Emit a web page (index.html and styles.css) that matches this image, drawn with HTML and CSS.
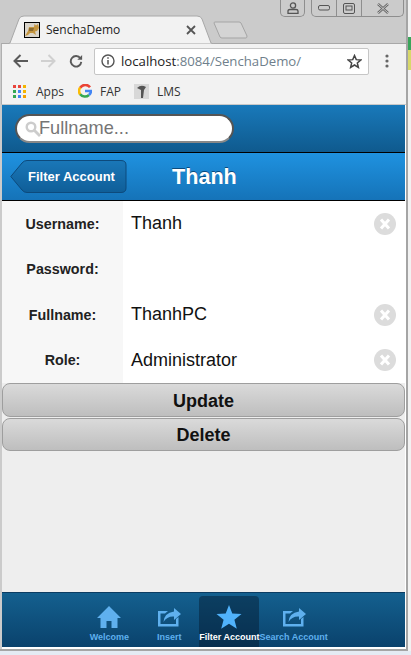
FILE: index.html
```html
<!DOCTYPE html>
<html lang="en">

<head>
    <meta charset="UTF-8">
    <title>SenchaDemo</title>
    <link rel="stylesheet" href="styles.css">
</head>

<body>
    <div class="window">
        <div class="tabstrip">
            <div class="tab">
                <svg class="tab-shape" width="207" height="29" viewBox="0 0 207 29">
                    <path d="M0 29 L3 28 L12 4 Q13 1 17 1 L190 1 Q194 1 195 4 L204 28 L207 29 Z" fill="#f2f2f2" stroke="#a8a8a8" />
                </svg>
                <span class="favicon">
                    <svg width="14" height="14" viewBox="0 0 14 14">
                        <rect width="14" height="14" fill="#d9d4ca" />
                        <path d="M0 13 L3 8 L4 4 L9 4 L9.500 1 L11 2.500 L13 1 L14 5 L12 8 L10 8.500 L11 12 L8 10 L5 10 L3 12 Z" fill="#c4953f" />
                        <path d="M4 5 L9 5 L8 8 L4 8 Z" fill="#8a6a2e" />
                    </svg>
                </span>
                <span class="tab-title">SenchaDemo</span>
                <svg class="tab-close" width="10" height="10" viewBox="0 0 10 10">
                    <path d="M1 1 L9 9 M9 1 L1 9" stroke="#555" stroke-width="1.8" />
                </svg>
            </div>
            <svg class="newtab" width="36" height="18" viewBox="0 0 36 18">
                <path d="M1 2 Q1 1 2 1 L26 1 Q27 1 28 2 L34 15 Q34 17 33 17 L9 17 Q8 17 7 16 Z" fill="#d4d4d4" stroke="#a5a5a5" />
            </svg>
            <div class="winbtn winbtn-user">
                <svg width="12" height="12" viewBox="0 0 12 12">
                    <circle cx="6" cy="3.5" r="2.6" fill="none" stroke="#555" stroke-width="1.3" />
                    <path d="M1 11.5 L1 9 Q1 7.5 3 7.5 L9 7.5 Q11 7.5 11 9 L11 11.5 Z" fill="none" stroke="#555" stroke-width="1.3" />
                </svg>
            </div>
            <div class="wingroup">
                <div class="winbtn-part">
                    <svg width="12" height="6" viewBox="0 0 12 6"><rect x=".5" y=".5" width="11" height="4.5" rx="1.5" fill="none" stroke="#555" /></svg>
                </div>
                <div class="winbtn-part">
                    <svg width="12" height="11" viewBox="0 0 12 11"><rect x=".5" y=".5" width="11" height="10" rx="1.5" fill="none" stroke="#555" /><rect x="3" y="3" width="6" height="4" fill="none" stroke="#555" /></svg>
                </div>
                <div class="winbtn-part winbtn-close">
                    <svg width="14" height="11" viewBox="0 0 14 11"><path d="M2 1 L12 10 M12 1 L2 10" stroke="#666" stroke-width="2.4" /><path d="M2 1 L12 10 M12 1 L2 10" stroke="#ddd" stroke-width=".8" /></svg>
                </div>
            </div>
        </div>

        <div class="toolbar">
            <svg class="nav-icon" width="15" height="14" viewBox="0 0 15 14">
                <path d="M15 7 L2 7 M7.5 1 L1.5 7 L7.5 13" fill="none" stroke="#5a5a5a" stroke-width="2" />
            </svg>
            <svg class="nav-icon" width="15" height="14" viewBox="0 0 15 14">
                <path d="M0 7 L13 7 M7.5 1 L13.5 7 L7.5 13" fill="none" stroke="#d0d0d0" stroke-width="2" />
            </svg>
            <svg class="nav-icon" width="14" height="14" viewBox="0 0 16 16">
                <path d="M13 5 A6 6 0 1 0 14 9" fill="none" stroke="#5a5a5a" stroke-width="2.2" />
                <path d="M9.5 6.5 L15 6.5 L15 1 Z" fill="#5a5a5a" />
            </svg>
            <div class="omnibox">
                <svg width="14" height="14" viewBox="0 0 14 14">
                    <circle cx="7" cy="7" r="6" fill="none" stroke="#555" stroke-width="1.4" />
                    <path d="M7 6 L7 10.5 M7 3.2 L7 4.8" stroke="#555" stroke-width="1.5" />
                </svg>
                <span class="url"><span class="url-host">localhost</span>:8084/SenchaDemo/</span>
                <svg class="url-star" width="15" height="15" viewBox="0 0 24 24">
                    <path d="M12 2.5 L14.8 9 L22 9.6 L16.5 14.3 L18.2 21.4 L12 17.6 L5.8 21.4 L7.5 14.3 L2 9.6 L9.2 9 Z" fill="none" stroke="#444" stroke-width="2.4" />
                </svg>
            </div>
            <svg class="menu-dots" width="4" height="14" viewBox="0 0 4 14">
                <circle cx="2" cy="2" r="1.6" fill="#666" />
                <circle cx="2" cy="7" r="1.6" fill="#666" />
                <circle cx="2" cy="12" r="1.6" fill="#666" />
            </svg>
        </div>

        <div class="bookmarks">
            <div class="bookmark bookmark-apps">
                <svg width="13" height="13" viewBox="0 0 13 13">
                    <rect x="0" y="0" width="3" height="3" fill="#e8453c" /><rect x="5" y="0" width="3" height="3" fill="#e8453c" /><rect x="10" y="0" width="3" height="3" fill="#f4b400" />
                    <rect x="0" y="5" width="3" height="3" fill="#34a853" /><rect x="5" y="5" width="3" height="3" fill="#4285f4" /><rect x="10" y="5" width="3" height="3" fill="#f4b400" />
                    <rect x="0" y="10" width="3" height="3" fill="#34a853" /><rect x="5" y="10" width="3" height="3" fill="#4285f4" /><rect x="10" y="10" width="3" height="3" fill="#f4a000" />
                </svg>
                <span>Apps</span>
            </div>
            <div class="bookmark bookmark-fap">
                <svg width="14" height="14" viewBox="0 0 14 14" fill="none" stroke-width="2.6">
                    <path d="M12 3.2 A6 6 0 0 0 2.2 3.8" stroke="#ea4335" />
                    <path d="M2.2 3.6 A6 6 0 0 0 2.2 10.4" stroke="#fbbc05" />
                    <path d="M2.2 10.2 A6 6 0 0 0 11 11" stroke="#34a853" />
                    <path d="M11 11 A6 6 0 0 0 13 7 L7 7" stroke="#4285f4" />
                </svg>
                <span>FAP</span>
            </div>
            <div class="bookmark bookmark-lms">
                <svg width="15" height="15" viewBox="0 0 15 15">
                    <rect width="15" height="15" fill="#d8d8d8" />
                    <path d="M3 4 Q7 0 12 3 L10 6 L9 14 L7 14 L7 6 Z" fill="#555" />
                </svg>
                <span>LMS</span>
            </div>
        </div>

        <div class="app">
            <div class="searchbar">
                <div class="searchfield">
                    <svg class="searchfield-icon" width="16" height="16" viewBox="0 0 16 16">
                        <circle cx="6" cy="6" r="4.3" fill="none" stroke="#ccc" stroke-width="2.4" />
                        <path d="M9.5 9.5 L15 15" stroke="#ccc" stroke-width="2.8" />
                    </svg>
                    <span>Fullname...</span>
                </div>
            </div>

            <div class="titlebar">
                <div class="backbtn">
                    <svg class="backbtn-shape" width="117" height="33" viewBox="0 0 117 33">
                        <defs>
                            <linearGradient id="backfill" x1="0" y1="0" x2="0" y2="1">
                                <stop offset="0" stop-color="#1a77b8" />
                                <stop offset="1" stop-color="#0f5e98" />
                            </linearGradient>
                        </defs>
                        <path d="M.8 16.5 L12 3 Q14 .5 17 .5 L111 .5 Q116 .5 116 5 L116 28 Q116 32.5 111 32.5 L17 32.5 Q14 32.5 12 30 Z" fill="url(#backfill)" stroke="#0d4a7c" />
                    </svg>
                    <span class="backbtn-text">Filter Account</span>
                </div>
                <h1 class="title">Thanh</h1>
            </div>

            <div class="form">
                <div class="row">
                    <label class="row-label">Username:</label>
                    <div class="row-value">Thanh</div>
                    <svg class="clear" width="22" height="22" viewBox="0 0 22 22"><circle cx="11" cy="11" r="11" fill="#dcdcdc" /><path d="M7 6.5 L15 15.5 M15 6.5 L7 15.5" stroke="#fff" stroke-width="3" /></svg>
                </div>
                <div class="row">
                    <label class="row-label">Password:</label>
                    <div class="row-value"></div>
                </div>
                <div class="row">
                    <label class="row-label">Fullname:</label>
                    <div class="row-value">ThanhPC</div>
                    <svg class="clear" width="22" height="22" viewBox="0 0 22 22"><circle cx="11" cy="11" r="11" fill="#dcdcdc" /><path d="M7 6.5 L15 15.5 M15 6.5 L7 15.5" stroke="#fff" stroke-width="3" /></svg>
                </div>
                <div class="row">
                    <label class="row-label">Role:</label>
                    <div class="row-value">Administrator</div>
                    <svg class="clear" width="22" height="22" viewBox="0 0 22 22"><circle cx="11" cy="11" r="11" fill="#dcdcdc" /><path d="M7 6.5 L15 15.5 M15 6.5 L7 15.5" stroke="#fff" stroke-width="3" /></svg>
                </div>
            </div>

            <div class="actions">
                <div class="btn">Update</div>
                <div class="btn">Delete</div>
            </div>

            <div class="tabbar">
                <div class="tabitem">
                    <svg width="26" height="24" viewBox="0 0 26 24">
                        <path d="M13 1 L25 13 L21.5 13 L21.5 23 L15.5 23 L15.5 16 L10.5 16 L10.5 23 L4.5 23 L4.5 13 L1 13 Z" fill="#5fb0ee" />
                    </svg>
                    <span>Welcome</span>
                </div>
                <div class="tabitem">
                    <svg width="26" height="24" viewBox="0 0 26 24">
                        <path d="M2 6 L12 6 L9 8.5 L4.5 8.5 L4.5 19 L20 19 L20 14 L22.5 12 L22.5 21.500 L2 21.500 Z" fill="#5fb0ee" />
                        <path d="M18 3 L25 9 L18 15 L18 11.500 Q11 11 7.500 17 Q8 8 18 6.500 Z" fill="#5fb0ee" />
                    </svg>
                    <span>Insert</span>
                </div>
                <div class="tabitem tabitem-active">
                    <svg width="26" height="24" viewBox="0 0 26 24">
                        <path d="M13 0 L16.300 8.500 L25.500 9 L18.400 14.800 L20.800 23.800 L13 18.800 L5.200 23.800 L7.600 14.800 L.5 9 L9.700 8.500 Z" fill="#50b2fb" />
                    </svg>
                    <span>Filter Account</span>
                </div>
                <div class="tabitem">
                    <svg width="26" height="24" viewBox="0 0 26 24">
                        <path d="M2 6 L12 6 L9 8.5 L4.5 8.5 L4.5 19 L20 19 L20 14 L22.5 12 L22.5 21.500 L2 21.500 Z" fill="#5fb0ee" />
                        <path d="M18 3 L25 9 L18 15 L18 11.500 Q11 11 7.500 17 Q8 8 18 6.500 Z" fill="#5fb0ee" />
                    </svg>
                    <span>Search Account</span>
                </div>
            </div>
        </div>
    </div>
    <div class="desktop">
        <div class="desktop-green"></div>
        <div class="desktop-yellow"></div>
    </div>
</body>

</html>
```

FILE: styles.css
```css
* {
    margin: 0;
    padding: 0;
    box-sizing: border-box;
}

html,
body {
    width: 411px;
    height: 655px;
    overflow: hidden;
}

body {
    display: flex;
    align-items: flex-start;
    background-color: #e4ebf3;
    font-family: "Liberation Sans", Arial, sans-serif;
}

.window {
    width: 408px;
    height: 651px;
    display: flex;
    flex-direction: column;
    background-color: #cbcbcb;
    border-right: 2px solid #a5a5a5;
    border-bottom: 2px solid #a5a5a5;
}

.desktop {
    flex: 1;
    height: 651px;
    display: flex;
    flex-direction: column;
    background-color: #f2f2f2;
}

.desktop-green {
    margin-top: 37px;
    height: 13px;
    background-color: #3aa55a;
}

.desktop-yellow {
    height: 20px;
    background-color: #d8d86a;
}

/* browser chrome */
.tabstrip {
    height: 43px;
    flex: none;
    display: flex;
    align-items: flex-end;
}

.tab {
    position: relative;
    width: 207px;
    height: 29px;
    margin-left: 7px;
    margin-bottom: -1px;
    padding: 7px 0 0 17px;
    display: flex;
    align-items: flex-start;
    z-index: 1;
}

.tab-shape {
    position: absolute;
    left: 0;
    top: 0;
}

.favicon {
    position: relative;
    width: 16px;
    height: 16px;
    border: 1px solid #000;
    display: flex;
}

.tab-title {
    position: relative;
    margin-left: 6px;
    width: 135px;
    font-family: "Open Sans", sans-serif;
    font-size: 12px;
    line-height: 16px;
    color: #222;
}

.tab-close {
    position: relative;
    margin: 3px 0 0 5px;
}

.newtab {
    margin: 0 0 4px -1px;
}

.winbtn-user {
    align-self: flex-start;
    width: 25px;
    height: 17px;
    margin-left: 31px;
    border: 1px solid #8e8e8e;
    border-top: 0;
    border-radius: 0 0 5px 5px;
    display: flex;
    align-items: center;
    justify-content: center;
}

.wingroup {
    align-self: flex-start;
    width: 93px;
    height: 17px;
    margin-left: 6px;
    display: flex;
    border: 1px solid #8e8e8e;
    border-top: 0;
    border-radius: 0 0 5px 5px;
}

.winbtn-part {
    width: 25px;
    display: flex;
    align-items: center;
    justify-content: center;
    border-right: 1px solid #8e8e8e;
}

.winbtn-close {
    flex: 1;
    border-right: 0;
}

.toolbar {
    height: 40px;
    flex: none;
    margin-left: 1px;
    display: flex;
    align-items: center;
    background-color: #f2f2f2;
    border-top: 1px solid #a8a8a8;
    border-left: 1px solid #b0b0b0;
    padding-left: 11px;
    padding-bottom: 5px;
}

.nav-icon {
    margin-right: 13px;
}

.nav-icon+.nav-icon+.nav-icon {
    margin-right: 11px;
}

.omnibox {
    width: 275px;
    height: 27px;
    flex: none;
    display: flex;
    align-items: center;
    padding-left: 6px;
    background-color: #fff;
    border: 1px solid #c6c6c6;
    border-radius: 2px;
}

.url {
    margin-left: 6px;
    flex: 1;
    font-family: "Open Sans", sans-serif;
    font-size: 13.2px;
    color: #6f7f8c;
    white-space: nowrap;
}

.url-host {
    color: #222;
}

.url-star {
    margin-right: 6px;
}

.menu-dots {
    margin-left: 16px;
}

.bookmarks {
    height: 22px;
    flex: none;
    margin-left: 1px;
    display: flex;
    align-items: center;
    background-color: #f2f2f2;
    border-left: 1px solid #b0b0b0;
    border-bottom: 1px solid #c8c8c8;
    padding-left: 11px;
    padding-bottom: 5px;
    font-family: "Open Sans", sans-serif;
    font-size: 12px;
    color: #333;
}

.bookmark {
    display: flex;
    align-items: center;
}

.bookmark-apps span {
    margin-left: 10px;
}

.bookmark-fap {
    margin-left: 14px;
}

.bookmark-fap span {
    margin-left: 8px;
}

.bookmark-lms {
    margin-left: 13px;
}

.bookmark-lms span {
    margin-left: 8px;
}

/* sencha app */
.app {
    flex: 1;
    margin-left: 2px;
    display: flex;
    flex-direction: column;
    background-color: #eee;
    border-right: 1px solid #fff;
    border-bottom: 2px solid #fff;
}

.searchbar {
    height: 48px;
    flex: none;
    padding: 9px 0 0 13px;
    background-image: linear-gradient(#1979ba, #0f5a8e);
    border-bottom: 1px solid #000;
}

.searchfield {
    width: 219px;
    height: 29px;
    display: flex;
    align-items: center;
    padding-left: 8px;
    background-color: #fff;
    border: 2px solid #555;
    border-bottom-color: #888;
    border-radius: 15px;
    font-size: 18.2px;
    color: #757575;
}

.searchfield-icon {
    margin-right: -2px;
    flex: none;
}

.titlebar {
    height: 48px;
    flex: none;
    display: flex;
    align-items: center;
    padding-left: 8px;
    background-image: linear-gradient(#1f92e0, #1573b8);
    border-bottom: 1px solid #000;
}

.backbtn {
    position: relative;
    width: 117px;
    height: 33px;
    display: flex;
    align-items: center;
    padding-left: 18px;
    margin-top: -1px;
}

.backbtn-shape {
    position: absolute;
    left: 0;
    top: 0;
}

.backbtn-text {
    position: relative;
    font-size: 13px;
    font-weight: bold;
    color: #fff;
    white-space: nowrap;
}

.title {
    margin-left: 45px;
    font-size: 21.6px;
    font-weight: bold;
    color: #fff;
    text-shadow: 0 -1px 0 #0c4a7c;
}

.form {
    flex: none;
    background-color: #fff;
}

.row {
    height: 45.5px;
    display: flex;
    align-items: center;
    padding-right: 9px;
}

.row-label {
    width: 121px;
    height: 100%;
    flex: none;
    display: flex;
    align-items: center;
    justify-content: center;
    background-color: #f7f7f7;
    font-size: 14.3px;
    font-weight: bold;
    color: #222;
}

.row-value {
    flex: 1;
    padding-left: 8px;
    font-size: 18px;
    color: #111;
}

.clear {
    flex: none;
}

.actions {
    flex: none;
}

.btn {
    height: 34px;
    display: flex;
    align-items: center;
    justify-content: center;
    padding-top: 2px;
    background-image: linear-gradient(#dadada, #bebebe);
    border: 1px solid #9e9e9e;
    border-radius: 8px;
    font-size: 18px;
    font-weight: bold;
    color: #111;
}

.btn+.btn {
    margin-top: 1px;
    height: 33px;
}

.tabbar {
    height: 55px;
    flex: none;
    margin-top: auto;
    display: flex;
    justify-content: center;
    padding-top: 3px;
    background-image: linear-gradient(#14608f, #0a426c);
    border-top: 1px solid #0b3c62;
}

.tabitem {
    min-width: 60px;
    display: flex;
    flex-direction: column;
    align-items: center;
    padding-top: 9px;
    font-size: 9px;
    font-weight: bold;
    color: #5fb0ee;
    white-space: nowrap;
}

.tabitem span {
    margin-top: 3px;
}

.tabitem-active {
    color: #fff;
    background-color: rgba(5, 25, 45, .45);
    border-radius: 4px 4px 0 0;
}
```
